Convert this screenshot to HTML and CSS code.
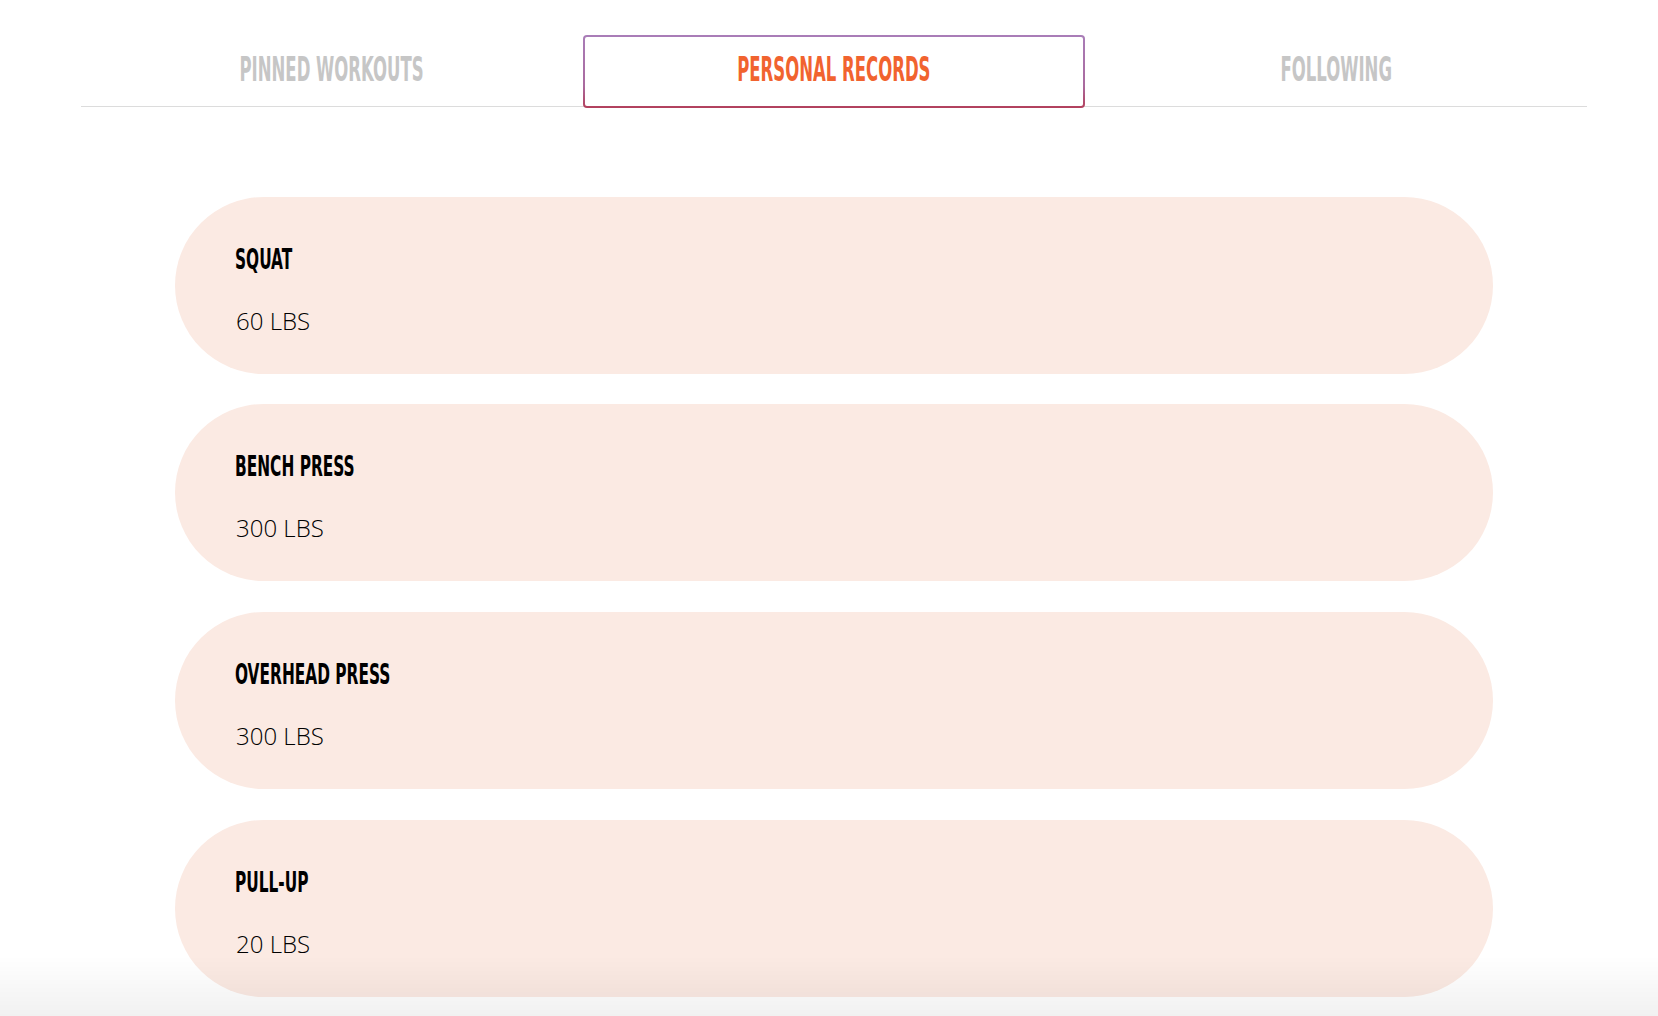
FILE: index.html
```html
<!DOCTYPE html>
<html lang="en">
<head>
<meta charset="utf-8">
<title>Personal Records</title>
<link rel="stylesheet" href="styles.css">
</head>
<body>
  <nav class="tabs">
    <div class="tab"><span class="tab-label">Pinned Workouts</span></div>
    <div class="tab tab-active"><span class="tab-label">Personal Records</span></div>
    <div class="tab"><span class="tab-label">Following</span></div>
  </nav>
  <main class="records">
    <section class="record">
      <h2 class="record-name"><span class="condensed">Squat</span></h2>
      <p class="record-value">60 LBS</p>
    </section>
    <section class="record">
      <h2 class="record-name"><span class="condensed">Bench Press</span></h2>
      <p class="record-value">300 LBS</p>
    </section>
    <section class="record">
      <h2 class="record-name"><span class="condensed">Overhead Press</span></h2>
      <p class="record-value">300 LBS</p>
    </section>
    <section class="record">
      <h2 class="record-name"><span class="condensed">Pull-up</span></h2>
      <p class="record-value">20 LBS</p>
    </section>
  </main>
  <div class="bottom-fade"></div>
</body>
</html>
```

FILE: styles.css
```css
html, body {
  margin: 0;
  padding: 0;
  background: #ffffff;
}

body {
  font-family: "Open Sans", "Liberation Sans", sans-serif;
  color: #111111;
}

.tabs {
  display: grid;
  grid-template-columns: repeat(3, 1fr);
  width: 1506px;
  margin: 35px 0 0 81px;
  border-bottom: 1px solid #dcdcdc;
}

.tab {
  height: 71px;
  padding-bottom: 2px;
  display: flex;
  align-items: center;
  justify-content: center;
  box-sizing: border-box;
}

.tab-label {
  display: inline-block;
  font-family: "DejaVu Sans Condensed", "Liberation Sans", sans-serif;
  font-weight: 700;
  font-size: 33px;
  line-height: 1;
  text-transform: uppercase;
  color: #c6c6c6;
  transform: scaleX(0.556);
  transform-origin: center;
  white-space: nowrap;
}

.tab-active {
  height: 73px;
  padding-bottom: 4px;
  margin-bottom: -2px;
  border: 2px solid transparent;
  border-radius: 4px;
  background:
    linear-gradient(#ffffff, #ffffff) padding-box,
    linear-gradient(to bottom, #a97db8, #aa6a9e 70%, #b3405c) border-box;
  position: relative;
  z-index: 1;
}

.tab-active .tab-label {
  color: #f1632f;
}

.records {
  width: 1318px;
  margin: 89.7px 0 0 175px;
  display: flex;
  flex-direction: column;
  gap: 30.7px;
}

.record {
  height: 177px;
  box-sizing: border-box;
  border-radius: 88.5px;
  background: #fbeae3;
  padding: 48px 0 0 60px;
}

.record-name {
  margin: 0 0 35px 0;
  font-family: "DejaVu Sans Condensed", "Liberation Sans", sans-serif;
  font-weight: 700;
  font-size: 28.5px;
  line-height: 29px;
  color: #000000;
}

.condensed {
  display: inline-block;
  text-transform: uppercase;
  transform: scaleX(0.6);
  transform-origin: left center;
  white-space: nowrap;
}

.record-value {
  margin: 0 0 0 1px;
  font-family: "Open Sans", "Liberation Sans", sans-serif;
  font-weight: 300;
  font-size: 24px;
  line-height: 24px;
  color: #000000;
}

.bottom-fade {
  position: fixed;
  left: 0;
  right: 0;
  bottom: 0;
  height: 60px;
  background: linear-gradient(to bottom, rgba(0, 0, 0, 0), rgba(0, 0, 0, 0.055));
  pointer-events: none;
  z-index: 5;
}
```
